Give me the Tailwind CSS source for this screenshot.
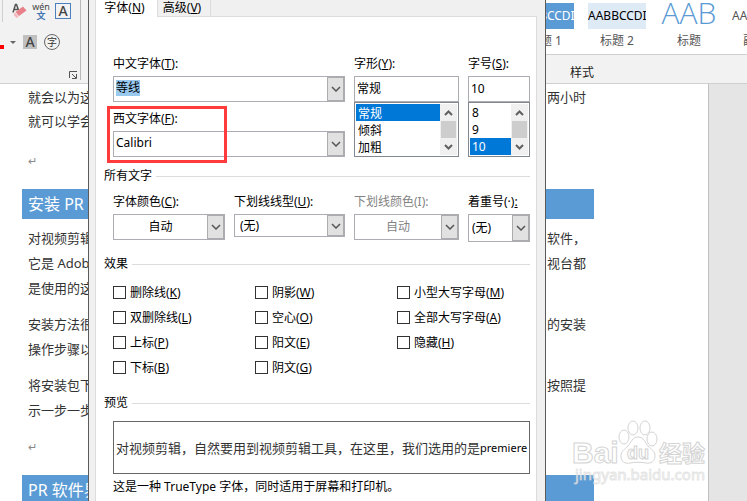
<!DOCTYPE html>
<html lang="zh-CN">
  <head>
    <meta charset="UTF-8" />
    <meta name="viewport" content="width=device-width, initial-scale=1.0" />
    <title>字体</title>
    <script src="https://cdn.jsdelivr.net/npm/@tailwindcss/browser@4"></script>
  </head>

  <body class="relative flex flex-col h-screen overflow-hidden bg-white text-xs text-black font-['Noto_Sans','Noto_Sans_CJK_SC',sans-serif]">
    <!-- Ribbon -->
    <header class="flex justify-between h-[84px] shrink-0 bg-[#f2f2f2] border-b border-[#cfcfcf]">
      <div class="flex flex-col w-[81px] h-20 border-r border-[#b8b8b8]">
        <div class="flex items-center gap-1.5 h-[22px] ml-0.5 pl-2 border-l border-[#d0d0d0]">
          <button aria-label="清除格式">
            <svg class="w-4 h-4" viewBox="0 0 16 16">
              <path d="M2 9.500 4.500 1.500h1L7.500 7M3.500 6.500H7" fill="none" stroke="#555" stroke-width="1.500" />
              <path d="m12 3.500 3.500 4L8 13 4.500 9z" fill="#e8808a" />
              <path d="m4 9.500 3.500 4L6 15 3 12.500v-2z" fill="#f5b5bb" />
            </svg>
          </button>
          <button class="flex flex-col items-center w-4 text-[9px] leading-[9px] text-[#444]" aria-label="拼音指南">
            <span>wén</span>
            <span class="font-bold text-[#3f74b0]">文</span>
          </button>
          <button class="w-4 h-4 border border-[#4a80bd] text-sm leading-[14px] font-medium text-[#444]">A</button>
        </div>
        <div class="flex items-center h-4 mt-3">
          <span class="w-1 h-1 mt-2.5 bg-[#f00]"></span>
          <svg class="w-[19px] h-4" viewBox="0 0 19 16"><path d="M6 7h6l-3 3z" fill="#666" /></svg>
          <button class="w-[14px] h-[14px] bg-[#c0c0c0] text-sm leading-[14px] font-medium text-[#444]">A</button>
          <button class="w-4 h-4 ml-[7px] rounded-full border border-[#666] text-[10px] leading-[13px] text-[#333]">字</button>
        </div>
        <button class="self-end mt-auto mr-[3px]" aria-label="字体设置">
          <svg class="w-2 h-[10px]" viewBox="0 0 8 10" fill="none" stroke="#555">
            <path d="M.5 8V1.500H8M3 4l4 4M7.500 4v4.500H3" />
          </svg>
        </button>
      </div>

      <div class="flex flex-col w-[231px] overflow-hidden">
        <div class="flex gap-[14px] h-[55px] shrink-0 pt-[3px] bg-white border-b border-[#cfcfcf] text-[#555]">
          <button class="flex flex-col items-center gap-1 w-[58px] shrink-0">
            <span class="w-full h-[26px] overflow-hidden bg-[#5b9bd5] leading-[26px] text-white">AABBCCDI</span>
            <span class="whitespace-nowrap">标题 1</span>
          </button>
          <button class="flex flex-col items-center gap-1 w-[58px] shrink-0">
            <span class="w-full h-[26px] overflow-hidden bg-[#deeaf6] leading-[26px] text-black">AABBCCDI</span>
            <span class="whitespace-nowrap">标题 2</span>
          </button>
          <button class="flex flex-col items-center gap-1 w-[58px] shrink-0">
            <span class="w-full h-[26px] overflow-hidden text-[30px] leading-[20px] font-light text-[#5b9bd5] font-['Open_Sans',sans-serif]">AAB</span>
            <span class="whitespace-nowrap">标题</span>
          </button>
          <button class="flex flex-col items-center gap-1 w-[58px] shrink-0">
            <span class="w-full h-[26px] overflow-hidden leading-[26px]">AABBCCDI</span>
            <span class="whitespace-nowrap">副标题</span>
          </button>
        </div>
        <div class="pt-[10px] pl-[54px] text-[#222]">样式</div>
      </div>
    </header>

    <!-- Document -->
    <div class="flex flex-1 min-h-0 bg-[#e5e5e5]">
      <article class="flex flex-col gap-4 flex-1 mr-[38px] pt-px pl-[22px] pr-[114px] overflow-hidden bg-white border-r border-[#c0c0c0] text-[13px] leading-6 text-[#333]">
        <div class="pl-1.5 pr-2">
          <p class="flex justify-between"><span>就会以为这</span><span>两小时</span></p>
          <p>就可以学会</p>
        </div>
        <p class="px-1.5 text-[11px] text-[#888]">↵</p>
        <h2 class="shrink-0 px-1.5 bg-[#5b9bd5] text-base leading-[30px] text-white">安装 PR 软件</h2>
        <div class="flex flex-col gap-[11px] -mt-[9px] pl-1.5 pr-2 leading-[25px]">
          <div>
            <p class="flex justify-between"><span>对视频剪辑</span><span>软件，</span></p>
            <p class="flex justify-between"><span>它是 Adobe</span><span>视台都</span></p>
            <p>是使用的这</p>
          </div>
          <div>
            <p class="flex justify-between"><span>安装方法很</span><span>的安装</span></p>
            <p>操作步骤以</p>
          </div>
          <div>
            <p class="flex justify-between"><span>将安装包下</span><span>按照提</span></p>
            <p>示一步一步</p>
          </div>
          <p class="text-[11px] text-[#888]">↵</p>
        </div>
        <h2 class="shrink-0 px-1.5 bg-[#5b9bd5] text-base leading-[30px] text-white">PR 软件界面</h2>
      </article>
    </div>

    <!-- Watermark -->
    <svg class="absolute right-[39px] top-[416px] w-[138px] h-[72px]" viewBox="0 0 138 72" fill="#fff" stroke="#d4d4d4">
      <text x="2" y="47" font-family="Liberation Sans, sans-serif" font-size="30" font-weight="bold">Bai</text>
      <ellipse cx="54" cy="21" rx="5" ry="7" />
      <ellipse cx="63" cy="12" rx="5" ry="7" />
      <ellipse cx="75" cy="12" rx="5" ry="7" />
      <ellipse cx="82" cy="23" rx="5" ry="7" />
      <path d="M68 21c-6 0-7 6-10 9s-7 5-7 10c0 6 4 8 9 7 5-1 11-1 16 0 5 1 9-2 9-7 0-5-4-7-7-10s-4-9-10-9z" />
      <text x="57" y="43" font-family="Liberation Sans, sans-serif" font-size="18" font-weight="bold">du</text>
      <text x="89" y="46" font-family="Noto Sans CJK SC, sans-serif" font-size="23" font-weight="bold">经验</text>
      <text x="5" y="64" font-family="Noto Sans, sans-serif" font-size="15" fill="#fff" fill-opacity=".7" stroke-opacity=".6">jingyan.baidu.com</text>
    </svg>

    <!-- Font dialog -->
    <form class="absolute left-[88px] top-0 flex flex-col w-[458px] h-full pl-1.5 pr-2 bg-[#f0f0f0] border-x border-[#5a5a5a] leading-4">
      <div class="flex h-[17px] shrink-0">
        <button type="button" class="w-[62px] pr-1 pb-3 bg-white border-l border-[#dcdcdc]">字体(<u>N</u>)</button>
        <button type="button" class="w-[54px] pr-1 pb-2.5 border-x border-b border-[#dcdcdc]">高级(<u>V</u>)</button>
        <span class="flex-1 border-b border-[#dcdcdc]"></span>
      </div>

      <div class="relative flex-1 pt-[39px] pl-2 pr-1.5 bg-white border-x border-[#dcdcdc]">
        <div class="grid grid-cols-[232px_105px_62px] gap-x-[9px] pl-[9px]">
          <div class="flex flex-col gap-[13px]">
            <div class="flex flex-col gap-1">
              <label for="cnfont">中文字体(<u>T</u>):</label>
              <div class="flex h-[26px] border border-[#abadb3]">
                <input id="cnfont" value="等线" class="flex-1 min-w-0 px-0.5 pb-0.5 outline-none selection:bg-[#99c9ef] selection:text-black" />
                <button type="button" class="flex items-center justify-center w-[17px] bg-[#e1e1e1] border border-[#acacac]" aria-label="展开">
                  <svg class="w-[10px] h-[6px]" viewBox="0 0 10 6" fill="none" stroke="#555" stroke-width="1.500"><path d="m1 1 4 4 4-4" /></svg>
                </button>
              </div>
            </div>
            <div class="flex flex-col">
              <label for="enfont" class="-mt-1 mb-1">西文字体(<u>F</u>):</label>
              <div class="flex h-[26px] border border-[#abadb3]">
                <input id="enfont" value="Calibri" class="flex-1 min-w-0 px-0.5 pb-0.5 outline-none" />
                <button type="button" class="flex items-center justify-center w-[17px] bg-[#e1e1e1] border border-[#acacac]" aria-label="展开">
                  <svg class="w-[10px] h-[6px]" viewBox="0 0 10 6" fill="none" stroke="#555" stroke-width="1.500"><path d="m1 1 4 4 4-4" /></svg>
                </button>
              </div>
            </div>
          </div>

          <div class="flex flex-col">
            <label for="style" class="mb-1">字形(<u>Y</u>):</label>
            <input id="style" value="常规" class="h-[26px] px-0.5 pb-0.5 border border-[#abadb3] outline-none" />
            <div class="flex h-[55px] p-px border border-[#828790]">
              <select size="3" aria-label="字形" class="flex-1 min-w-0 overflow-hidden outline-none">
                <option selected class="h-[17px] px-0.5 py-0 leading-[17px] checked:bg-linear-to-r from-[#0078d7] to-[#0078d7] checked:[-webkit-text-fill-color:white]">常规</option>
                <option class="h-[17px] px-0.5 py-0 leading-[17px]">倾斜</option>
                <option class="h-[17px] px-0.5 py-0 leading-[17px]">加粗</option>
              </select>
              <svg class="w-[17px] h-[51px] bg-[#f0f0f0]" viewBox="0 0 17 51" fill="none" stroke="#606060" stroke-width="2">
                <path d="M1 17h15v17H1z" fill="#cdcdcd" stroke="none" />
                <path d="m5 11 3.500-3.500L12 11M5 41l3.500 3.500L12 41" />
              </svg>
            </div>
          </div>

          <div class="flex flex-col">
            <label for="size" class="mb-1">字号(<u>S</u>):</label>
            <input id="size" value="10" class="h-[26px] px-0.5 pb-0.5 border border-[#abadb3] outline-none" />
            <div class="flex h-[55px] p-px border border-[#828790]">
              <select size="3" aria-label="字号" class="flex-1 min-w-0 overflow-hidden outline-none">
                <option class="h-[17px] px-0.5 py-0 leading-[17px]">8</option>
                <option class="h-[17px] px-0.5 py-0 leading-[17px]">9</option>
                <option selected class="h-[17px] px-0.5 py-0 leading-[17px] checked:bg-linear-to-r from-[#0078d7] to-[#0078d7] checked:[-webkit-text-fill-color:white]">10</option>
              </select>
              <svg class="w-[17px] h-[51px] bg-[#f0f0f0]" viewBox="0 0 17 51" fill="none" stroke="#606060" stroke-width="2">
                <path d="M1 17h15v17H1z" fill="#cdcdcd" stroke="none" />
                <path d="m5 11 3.500-3.500L12 11M5 41l3.500 3.500L12 41" />
              </svg>
            </div>
          </div>
        </div>

        <div class="flex items-center gap-1 mt-[11px]">
          <h3>所有文字</h3>
          <hr class="flex-1 border-[#dcdcdc]" />
        </div>
        <div class="grid grid-cols-[112px_111px_105px_62px] items-start gap-x-[9px] h-[59px] mt-[10px] pl-[9px]">
          <div class="flex flex-col gap-1">
            <label for="color">字体颜色(<u>C</u>):</label>
            <div class="relative">
              <select id="color" class="appearance-none w-full h-[26px] pr-[17px] border border-[#abadb3] text-center"><option>自动</option></select>
              <span class="absolute right-px inset-y-px flex items-center justify-center w-[17px] bg-[#e1e1e1] border border-[#acacac] pointer-events-none">
                <svg class="w-[10px] h-[6px]" viewBox="0 0 10 6" fill="none" stroke="#555" stroke-width="1.500"><path d="m1 1 4 4 4-4" /></svg>
              </span>
            </div>
          </div>
          <div class="flex flex-col gap-1">
            <label for="underline">下划线线型(<u>U</u>):</label>
            <div class="relative">
              <select id="underline" class="appearance-none w-full h-[23px] pl-[5px] border border-[#abadb3]"><option>(无)</option></select>
              <span class="absolute right-px inset-y-px flex items-center justify-center w-[17px] bg-[#e1e1e1] border border-[#acacac] pointer-events-none">
                <svg class="w-[10px] h-[6px]" viewBox="0 0 10 6" fill="none" stroke="#555" stroke-width="1.500"><path d="m1 1 4 4 4-4" /></svg>
              </span>
            </div>
          </div>
          <div class="flex flex-col gap-1 text-[#838383]">
            <label for="ulcolor">下划线颜色(I):</label>
            <div class="relative">
              <select id="ulcolor" disabled class="appearance-none w-full h-[26px] pr-[17px] border border-[#abadb3] text-center opacity-100"><option>自动</option></select>
              <span class="absolute right-px inset-y-px flex items-center justify-center w-[17px] bg-[#e1e1e1] border border-[#acacac] pointer-events-none">
                <svg class="w-[10px] h-[6px]" viewBox="0 0 10 6" fill="none" stroke="#555" stroke-width="1.500"><path d="m1 1 4 4 4-4" /></svg>
              </span>
            </div>
          </div>
          <div class="flex flex-col gap-1">
            <label for="emphasis" class="whitespace-nowrap">着重号(·)<u>:</u></label>
            <div class="relative">
              <select id="emphasis" class="appearance-none w-full h-[28px] pl-[3px] border border-[#abadb3]"><option>(无)</option></select>
              <span class="absolute right-px inset-y-px flex items-center justify-center w-[17px] bg-[#e1e1e1] border border-[#acacac] pointer-events-none">
                <svg class="w-[10px] h-[6px]" viewBox="0 0 10 6" fill="none" stroke="#555" stroke-width="1.500"><path d="m1 1 4 4 4-4" /></svg>
              </span>
            </div>
          </div>
        </div>

        <div class="flex items-center gap-1 mt-[3px]">
          <h3>效果</h3>
          <hr class="flex-1 border-[#dcdcdc]" />
        </div>
        <div class="grid grid-cols-[142px_142px_1fr] auto-rows-[25px] items-center mt-2 pl-[9px]">
          <label class="flex items-center gap-1"><input type="checkbox" class="appearance-none w-[13px] h-[13px] border border-[#333]" /><span>删除线(<u>K</u>)</span></label>
          <label class="flex items-center gap-1"><input type="checkbox" class="appearance-none w-[13px] h-[13px] border border-[#333]" /><span>阴影(<u>W</u>)</span></label>
          <label class="flex items-center gap-1"><input type="checkbox" class="appearance-none w-[13px] h-[13px] border border-[#333]" /><span>小型大写字母(<u>M</u>)</span></label>
          <label class="flex items-center gap-1"><input type="checkbox" class="appearance-none w-[13px] h-[13px] border border-[#333]" /><span>双删除线(<u>L</u>)</span></label>
          <label class="flex items-center gap-1"><input type="checkbox" class="appearance-none w-[13px] h-[13px] border border-[#333]" /><span>空心(<u>O</u>)</span></label>
          <label class="flex items-center gap-1"><input type="checkbox" class="appearance-none w-[13px] h-[13px] border border-[#333]" /><span>全部大写字母(<u>A</u>)</span></label>
          <label class="flex items-center gap-1"><input type="checkbox" class="appearance-none w-[13px] h-[13px] border border-[#333]" /><span>上标(<u>P</u>)</span></label>
          <label class="flex items-center gap-1"><input type="checkbox" class="appearance-none w-[13px] h-[13px] border border-[#333]" /><span>阳文(<u>E</u>)</span></label>
          <label class="flex items-center gap-1"><input type="checkbox" class="appearance-none w-[13px] h-[13px] border border-[#333]" /><span>隐藏(<u>H</u>)</span></label>
          <label class="flex items-center gap-1"><input type="checkbox" class="appearance-none w-[13px] h-[13px] border border-[#333]" /><span>下标(<u>B</u>)</span></label>
          <label class="flex items-center gap-1"><input type="checkbox" class="appearance-none w-[13px] h-[13px] border border-[#333]" /><span>阴文(<u>G</u>)</span></label>
        </div>

        <div class="flex items-center gap-1 mt-[15px]">
          <h3>预览</h3>
          <hr class="flex-1 border-[#dcdcdc]" />
        </div>
        <div class="flex items-center h-[53px] mt-[10px] ml-[9px] pl-0.5 overflow-hidden border border-[#666] text-[13px] text-[#333] whitespace-nowrap">
          对视频剪辑，自然要用到视频剪辑工具，在这里，我们选用的是<span class="text-[11px] text-black">premiere</span>
        </div>
        <p class="mt-[5px] ml-[9px]">这是一种 TrueType 字体，同时适用于屏幕和打印机。</p>

        <!-- highlight around the western font field -->
        <div class="absolute left-[11px] top-[89px] w-[120px] h-[57px] border-3 border-[#ff3b3b] pointer-events-none"></div>
      </div>
    </form>

    <script>
      document.getElementById('cnfont').select();
    </script>
  </body>
</html>
